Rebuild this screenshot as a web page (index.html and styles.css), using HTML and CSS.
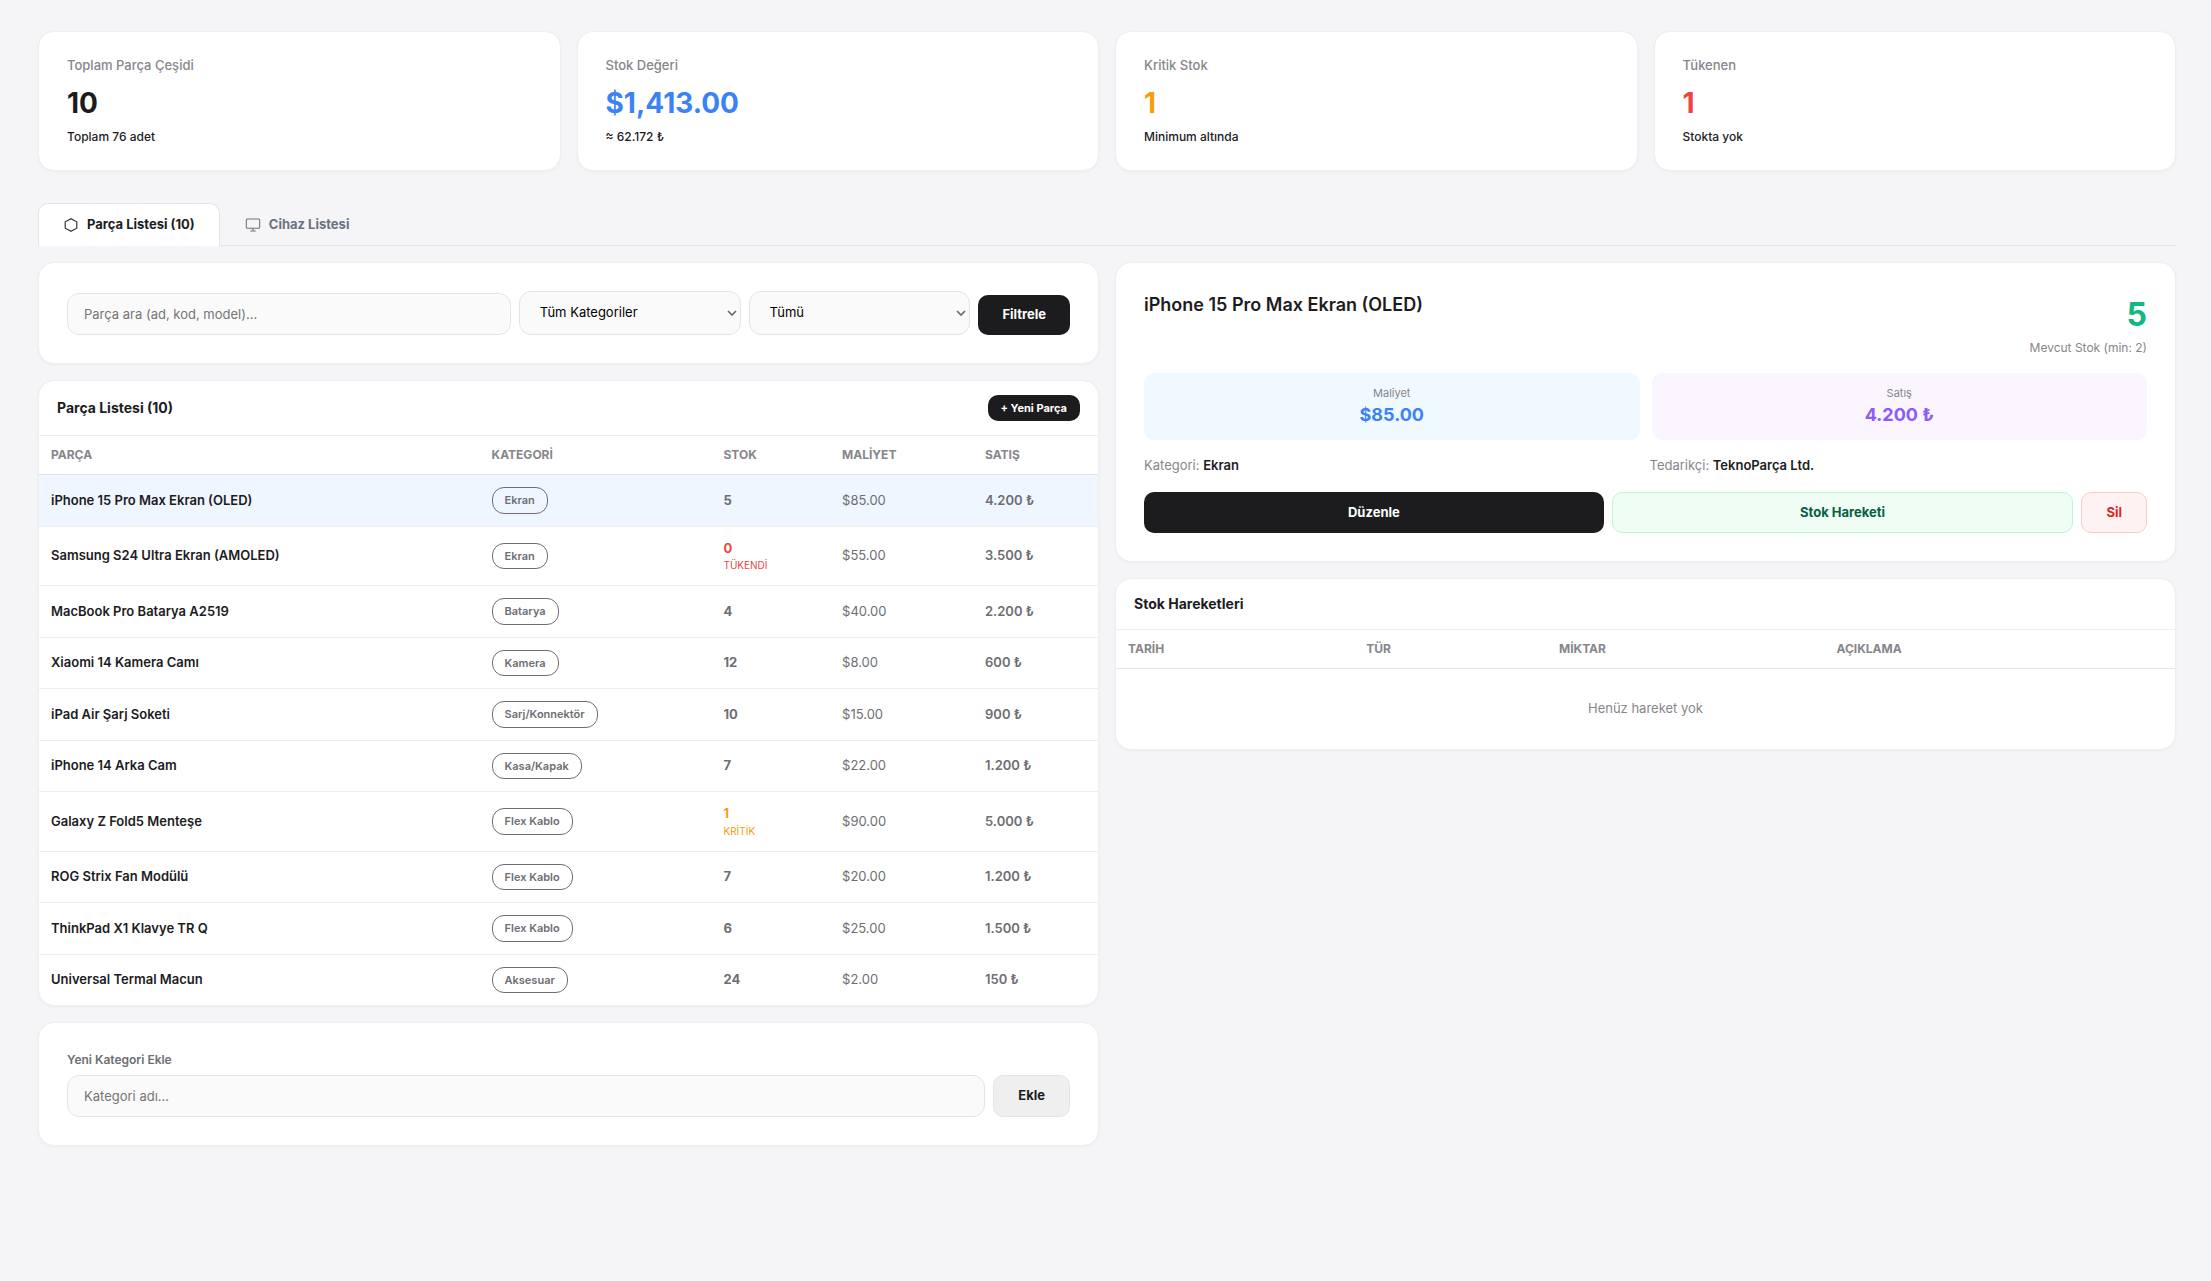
FILE: index.html
```html
<!DOCTYPE html>
<html lang="tr">
<head>
<meta charset="UTF-8" />
<meta name="viewport" content="width=device-width, initial-scale=1" />
<title>Parça Listesi</title>
<link rel="stylesheet" href="styles.css">
</head>
<body>

<div class="page">

  <div class="stats">
    <div class="card stat">
      <div class="stat-label">Toplam Parça Çeşidi</div>
      <div class="stat-value">10</div>
      <div class="stat-note">Toplam 76 adet</div>
    </div>
    <div class="card stat">
      <div class="stat-label">Stok Değeri</div>
      <div class="stat-value blue">$1,413.00</div>
      <div class="stat-note">≈ 62.172 ₺</div>
    </div>
    <div class="card stat">
      <div class="stat-label">Kritik Stok</div>
      <div class="stat-value orange">1</div>
      <div class="stat-note">Minimum altında</div>
    </div>
    <div class="card stat">
      <div class="stat-label">Tükenen</div>
      <div class="stat-value red">1</div>
      <div class="stat-note">Stokta yok</div>
    </div>
  </div>

  <nav class="tabs">
    <a href="#parcalar" class="tab active">
      <svg width="16" height="16" viewBox="0 0 24 24" fill="none" stroke="currentColor" stroke-width="1.6" stroke-linejoin="round"><path d="M12 2.5l8.7 4.8v9.4L12 21.5l-8.7-4.8V7.3z"/></svg>
      Parça Listesi (10)
    </a>
    <a href="#cihazlar" class="tab">
      <svg width="16" height="16" viewBox="0 0 24 24" fill="none" stroke="currentColor" stroke-width="1.6" stroke-linecap="round"><rect x="2" y="3" width="20" height="14" rx="1.5"/><path d="M8.5 21h7M12 17v4"/></svg>
      Cihaz Listesi
    </a>
  </nav>

  <div class="columns">
    <div class="column" id="parcalar">

      <form class="card padded filters">
        <input class="field" type="text" placeholder="Parça ara (ad, kod, model)..." aria-label="Parça ara">
        <div class="select">
          <select class="field" aria-label="Kategori">
            <option>Tüm Kategoriler</option>
            <option>Ekran</option>
            <option>Batarya</option>
            <option>Kamera</option>
          </select>
          <svg width="10" height="6" viewBox="0 0 10 6" fill="none" stroke="#6b6b6b" stroke-width="1.7"><path d="M1 1l4 4 4-4"/></svg>
        </div>
        <div class="select">
          <select class="field" aria-label="Stok durumu">
            <option>Tümü</option>
            <option>Kritik</option>
            <option>Tükenen</option>
          </select>
          <svg width="10" height="6" viewBox="0 0 10 6" fill="none" stroke="#6b6b6b" stroke-width="1.7"><path d="M1 1l4 4 4-4"/></svg>
        </div>
        <button type="button" class="btn dark">Filtrele</button>
      </form>

      <div class="card">
        <div class="card-head">
          <h2>Parça Listesi (10)</h2>
          <button type="button" class="btn dark small">+ Yeni Parça</button>
        </div>
        <table class="parts">
          <thead>
            <tr><th class="c-name">Parça</th><th class="c-cat">Kategori</th><th class="c-stock">Stok</th><th class="c-cost">Maliyet</th><th class="c-price">Satış</th></tr>
          </thead>
          <tbody>
            <tr class="selected"><td class="name">iPhone 15 Pro Max Ekran (OLED)</td><td><span class="badge">Ekran</span></td><td class="stock">5</td><td>$85.00</td><td class="price">4.200 ₺</td></tr>
            <tr><td class="name">Samsung S24 Ultra Ekran (AMOLED)</td><td><span class="badge">Ekran</span></td><td class="stock red">0<div class="state">TÜKENDİ</div></td><td>$55.00</td><td class="price">3.500 ₺</td></tr>
            <tr><td class="name">MacBook Pro Batarya A2519</td><td><span class="badge">Batarya</span></td><td class="stock">4</td><td>$40.00</td><td class="price">2.200 ₺</td></tr>
            <tr><td class="name">Xiaomi 14 Kamera Camı</td><td><span class="badge">Kamera</span></td><td class="stock">12</td><td>$8.00</td><td class="price">600 ₺</td></tr>
            <tr><td class="name">iPad Air Şarj Soketi</td><td><span class="badge">Sarj/Konnektör</span></td><td class="stock">10</td><td>$15.00</td><td class="price">900 ₺</td></tr>
            <tr><td class="name">iPhone 14 Arka Cam</td><td><span class="badge">Kasa/Kapak</span></td><td class="stock">7</td><td>$22.00</td><td class="price">1.200 ₺</td></tr>
            <tr><td class="name">Galaxy Z Fold5 Menteşe</td><td><span class="badge">Flex Kablo</span></td><td class="stock orange">1<div class="state">KRİTİK</div></td><td>$90.00</td><td class="price">5.000 ₺</td></tr>
            <tr><td class="name">ROG Strix Fan Modülü</td><td><span class="badge">Flex Kablo</span></td><td class="stock">7</td><td>$20.00</td><td class="price">1.200 ₺</td></tr>
            <tr><td class="name">ThinkPad X1 Klavye TR Q</td><td><span class="badge">Flex Kablo</span></td><td class="stock">6</td><td>$25.00</td><td class="price">1.500 ₺</td></tr>
            <tr><td class="name">Universal Termal Macun</td><td><span class="badge">Aksesuar</span></td><td class="stock">24</td><td>$2.00</td><td class="price">150 ₺</td></tr>
          </tbody>
        </table>
      </div>

      <form class="card padded">
        <label class="field-label" for="newCategory">Yeni Kategori Ekle</label>
        <div class="add-row">
          <input class="field" type="text" id="newCategory" placeholder="Kategori adı...">
          <button type="button" class="btn light">Ekle</button>
        </div>
      </form>

    </div>

    <div class="column">

      <div class="card padded detail">
        <div class="detail-head">
          <h3>iPhone 15 Pro Max Ekran (OLED)</h3>
          <div class="detail-stock">
            <div class="count">5</div>
            <div class="count-note">Mevcut Stok (min: 2)</div>
          </div>
        </div>
        <div class="amounts">
          <div class="amount cost">
            <div class="amount-label">Maliyet</div>
            <div class="amount-value">$85.00</div>
          </div>
          <div class="amount sale">
            <div class="amount-label">Satış</div>
            <div class="amount-value">4.200 ₺</div>
          </div>
        </div>
        <div class="facts">
          <div>Kategori: <strong>Ekran</strong></div>
          <div>Tedarikçi: <strong>TeknoParça Ltd.</strong></div>
        </div>
        <div class="actions">
          <button type="button" class="btn dark grow">Düzenle</button>
          <button type="button" class="btn green grow">Stok Hareketi</button>
          <button type="button" class="btn danger">Sil</button>
        </div>
      </div>

      <div class="card">
        <div class="card-head">
          <h2>Stok Hareketleri</h2>
        </div>
        <table class="moves">
          <thead>
            <tr><th class="c-date">Tarih</th><th class="c-type">Tür</th><th class="c-qty">Miktar</th><th class="c-text">Açıklama</th></tr>
          </thead>
          <tbody>
            <tr><td colspan="4" class="empty">Henüz hareket yok</td></tr>
          </tbody>
        </table>
      </div>

    </div>
  </div>
</div>

</body>
</html>
```
FILE: styles.css
```css
* {
  box-sizing: border-box;
}

body {
  margin: 0;
  background: #f5f5f7;
  color: #1c1c1e;
  font-family: Inter, "Liberation Sans", sans-serif;
  font-size: 13px;
  line-height: 1.5;
}

h2, h3 {
  margin: 0;
}

h2 {
  font-size: 14px;
  line-height: 22px;
  font-weight: 700;
}

h3 {
  font-size: 18px;
  font-weight: 600;
}

.page {
  padding: 31px 35px 31px 38px;
}

.card {
  background: #fff;
  border: 1px solid #efeff1;
  border-radius: 16px;
  box-shadow: 0 1px 3px rgba(0, 0, 0, 0.04);
  overflow: hidden;
}

.padded {
  padding: 28px;
}

.blue { color: #3b82f6; }
.orange { color: #f59e0b; }
.red { color: #ef4444; }

/* stats */
.stats {
  display: grid;
  grid-template-columns: repeat(4, 1fr);
  gap: 16px;
  margin-bottom: 32px;
}

.stat {
  padding: 24px 28px;
}

.stat-label {
  line-height: 18px;
  color: #86868b;
  font-weight: 500;
}

.stat-value {
  margin: 12px 0 8px;
  font-size: 28px;
  line-height: 34px;
  font-weight: 700;
}

.stat-note {
  font-size: 12px;
  font-weight: 500;
}

/* tabs */
.tabs {
  display: flex;
  margin-bottom: 16px;
  border-bottom: 1px solid #e3e4e8;
}

.tab {
  display: flex;
  align-items: center;
  gap: 8px;
  padding: 11px 24px;
  margin-bottom: -1px;
  border: 1px solid transparent;
  border-bottom: none;
  border-radius: 10px 10px 0 0;
  color: #6b7280;
  font-weight: 700;
  text-decoration: none;
}

.tab.active {
  background: #fff;
  border-color: #e3e4e8;
  color: #1c1c1e;
}

/* layout */
.columns {
  display: grid;
  grid-template-columns: 1fr 1fr;
  align-items: start;
  gap: 16px;
}

.column {
  display: flex;
  flex-direction: column;
  gap: 16px;
  min-width: 0;
}

/* forms */
.filters {
  display: grid;
  grid-template-columns: 2fr 1fr 1fr auto;
  align-items: end;
  gap: 8px;
}

.field {
  width: 100%;
  min-width: 0;
  height: 42px;
  padding: 0 16px;
  border: 1px solid #e3e4e8;
  border-radius: 12px;
  background: #fafafa;
  color: #000;
  font: inherit;
}

.field::placeholder {
  color: #757575;
}

.select {
  position: relative;
}

.select .field {
  display: block;
  height: 44px;
  padding: 0 20px;
  appearance: none;
}

/* arrow over the select */
.select svg {
  position: absolute;
  top: 19px;
  right: 4px;
  pointer-events: none;
}

.field-label {
  display: block;
  margin-bottom: 6px;
  color: #6e6e73;
  font-size: 12px;
  font-weight: 600;
}

.add-row {
  display: flex;
  gap: 8px;
}

.btn {
  padding: 10px 24px;
  border: none;
  border-radius: 10px;
  font: inherit;
  font-weight: 700;
  cursor: pointer;
}

.dark {
  background: #1c1c1e;
  color: #fff;
}

.light {
  border: 1px solid #e3e4e8;
  background: #efefef;
  color: #1c1c1e;
}

.green {
  border: 1px solid #bbf7d0;
  background: #f0fdf4;
  color: #065f46;
}

.danger {
  border: 1px solid #fecaca;
  background: #fef2f2;
  color: #dc2626;
}

.small {
  padding: 5px 13px;
  font-size: 11px;
}

.grow {
  flex: 1;
}

/* tables */
.card-head {
  display: flex;
  align-items: center;
  justify-content: space-between;
  padding: 14px 18px;
  border-bottom: 1px solid #efeff1;
}

table {
  width: 100%;
  border-collapse: separate;
  border-spacing: 0;
  table-layout: fixed;
}

th {
  padding: 10px 12px;
  border-bottom: 1px solid #e3e4e8;
  color: #86868b;
  font-size: 12px;
  font-weight: 700;
  text-align: left;
  text-transform: uppercase;
}

td {
  padding: 12px;
  border-bottom: 1px solid #efeff1;
  color: #6e6e73;
}

tr:last-child td {
  border-bottom: none;
}

.c-name { width: 41.6%; }
.c-cat { width: 21.9%; }
.c-stock { width: 11.2%; }
.c-cost { width: 13.5%; }
.c-price { width: 11.8%; }

.c-date { width: 22.5%; }
.c-type { width: 18.2%; }
.c-qty { width: 26.2%; }
.c-text { width: 33.1%; }

.selected td {
  background: #eff6ff;
}

.name {
  color: #1c1c1e;
  font-weight: 600;
}

.stock {
  font-weight: 700;
}

.price {
  font-weight: 600;
}

.stock.red { color: #ef4444; }
.stock.orange { color: #f59e0b; }

.state {
  font-size: 10px;
  font-weight: 400;
}

.badge {
  display: inline-block;
  padding: 4px 12px;
  border: 1px solid #6e6e73;
  border-radius: 12px;
  font-size: 11px;
  font-weight: 600;
  vertical-align: middle;
}

td.empty {
  padding: 30px 12px;
  color: #86868b;
  text-align: center;
}

/* part detail */
.detail {
  display: flex;
  flex-direction: column;
  gap: 16px;
}

.detail-head {
  display: flex;
  align-items: flex-start;
  justify-content: space-between;
}

.detail-stock {
  text-align: right;
}

.count {
  color: #10b981;
  font-size: 32px;
  font-weight: 700;
}

.count-note {
  color: #86868b;
  font-size: 12px;
}

.amounts {
  display: grid;
  grid-template-columns: 1fr 1fr;
  gap: 12px;
}

.amount {
  padding: 12px;
  border-radius: 10px;
  text-align: center;
}

.cost { background: #f0f9ff; }
.sale { background: #faf5ff; }
.cost .amount-value { color: #3b82f6; }
.sale .amount-value { color: #8b5cf6; }

.amount-label {
  color: #86868b;
  font-size: 11px;
}

.amount-value {
  font-size: 18px;
  font-weight: 700;
}

.facts {
  display: grid;
  grid-template-columns: 1fr 1fr;
  gap: 8px;
  color: #86868b;
}

.facts strong {
  color: #1c1c1e;
  font-weight: 600;
}

.actions {
  display: flex;
  gap: 8px;
}
```
